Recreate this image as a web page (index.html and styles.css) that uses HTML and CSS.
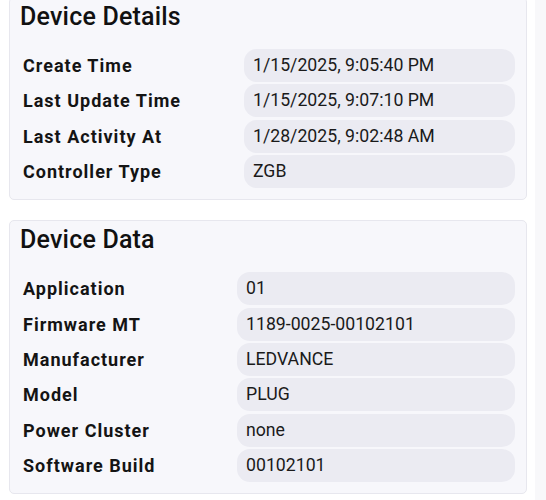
FILE: index.html
```html
<!DOCTYPE html>
<html>
<head>
<meta charset="utf-8">
<link rel="stylesheet" href="styles.css">
</head>
<body>
<div class="page">
  <main class="main">
    <section class="card">
      <h2 class="card-title">Device Details</h2>
      <div class="grid grid-details">
        <div class="label">Create Time</div><div class="value">1/15/2025, 9:05:40 PM</div>
        <div class="label">Last Update Time</div><div class="value">1/15/2025, 9:07:10 PM</div>
        <div class="label">Last Activity At</div><div class="value">1/28/2025, 9:02:48 AM</div>
        <div class="label">Controller Type</div><div class="value">ZGB</div>
      </div>
    </section>
    <section class="card">
      <h2 class="card-title">Device Data</h2>
      <div class="grid grid-data">
        <div class="label">Application</div><div class="value">01</div>
        <div class="label">Firmware MT</div><div class="value">1189-0025-00102101</div>
        <div class="label">Manufacturer</div><div class="value">LEDVANCE</div>
        <div class="label">Model</div><div class="value">PLUG</div>
        <div class="label">Power Cluster</div><div class="value">none</div>
        <div class="label">Software Build</div><div class="value">00102101</div>
      </div>
    </section>
  </main>
  <aside class="track"></aside>
</div>
</body>
</html>
```

FILE: styles.css
```css
html, body {
  margin: 0;
  padding: 0;
  background: #ffffff;
  font-family: Roboto, "Noto Sans", "Liberation Sans", sans-serif;
  color: #141414;
}
.page {
  display: flex;
  min-height: 500px;
}
.main {
  flex: 1;
  padding: 0 8px 0 9px;
  margin-top: -3px;
  display: flex;
  flex-direction: column;
  gap: 20px;
}
.track {
  width: 11px;
  background: #f8f8fa;
}
.card {
  background: #f7f7fb;
  border: 1px solid #e7e7ee;
  border-radius: 5px;
  padding: 7px 11px 11px 13px;
}
.card-title {
  margin: 0 0 20px -3px;
  font-size: 25px;
  line-height: 24px;
  font-weight: 500;
  letter-spacing: 0.2px;
  color: #111;
}
.grid {
  display: grid;
  row-gap: 2.4px;
  align-items: center;
}
.grid-details {
  grid-template-columns: 221px 1fr;
}
.grid-data {
  grid-template-columns: 214px 1fr;
}
.label {
  font-size: 18px;
  font-weight: 700;
  letter-spacing: 1px;
  color: #141414;
}
.value {
  background: #ebebf2;
  border-radius: 13px;
  height: 33px;
  line-height: 33px;
  padding: 0 9px;
  font-size: 17.7px;
  color: #1a1a1a;
}
```
